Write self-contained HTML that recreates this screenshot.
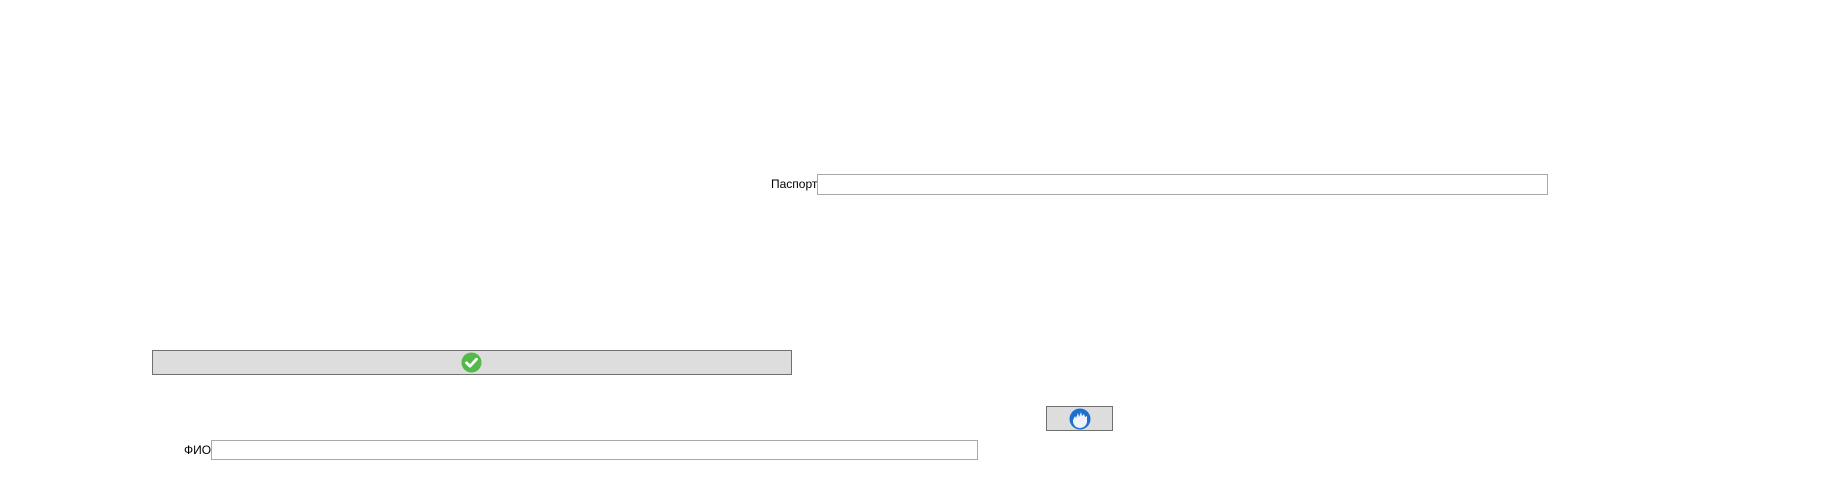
<!DOCTYPE html>
<html><head><meta charset="utf-8"><style>
html,body{margin:0;padding:0;background:#fff;width:1829px;height:477px;overflow:hidden;position:relative;font-family:"Segoe UI","Liberation Sans","DejaVu Sans",sans-serif;font-size:12px;color:#000}
.lbl{position:absolute;line-height:20px}
.inp{position:absolute;box-sizing:border-box;border:1px solid #a9a9a9;background:#fff}
.btn{position:absolute;box-sizing:border-box;border:1px solid #707070;background:#dddddd}
svg{position:absolute}
</style></head><body>
<div class="lbl" style="left:771px;top:174px">Паспорт</div>
<div class="inp" style="left:817px;top:174px;width:731px;height:21px"></div>

<div class="btn" style="left:152px;top:350px;width:640px;height:25px"></div>
<svg style="left:461px;top:352px" width="21" height="21" viewBox="0 0 21 21">
<circle cx="10.5" cy="10.5" r="10" fill="#55b84a"/>
<path d="M5.5 10.8 L9 14.2 L15.5 7.2" stroke="#fff" stroke-width="2.8" fill="none" stroke-linecap="round" stroke-linejoin="round"/>
</svg>

<div class="btn" style="left:1046px;top:406px;width:67px;height:25px"></div>
<svg style="left:1069px;top:408px" width="22" height="22" viewBox="0 0 22 22">
<circle cx="11" cy="11" r="10.5" fill="#1a6fd0"/>
<path d="M4 12 L6 8 L7 10 L9 5 L10 9 L12 4 L13 8 L15 6 L16 9 L18 8 L18 14 A7 7 0 0 1 4 12 Z" fill="#f0f4fa"/>
</svg>

<div class="lbl" style="left:184px;top:440px">ФИО</div>
<div class="inp" style="left:211px;top:440px;width:767px;height:20px"></div>
</body></html>
